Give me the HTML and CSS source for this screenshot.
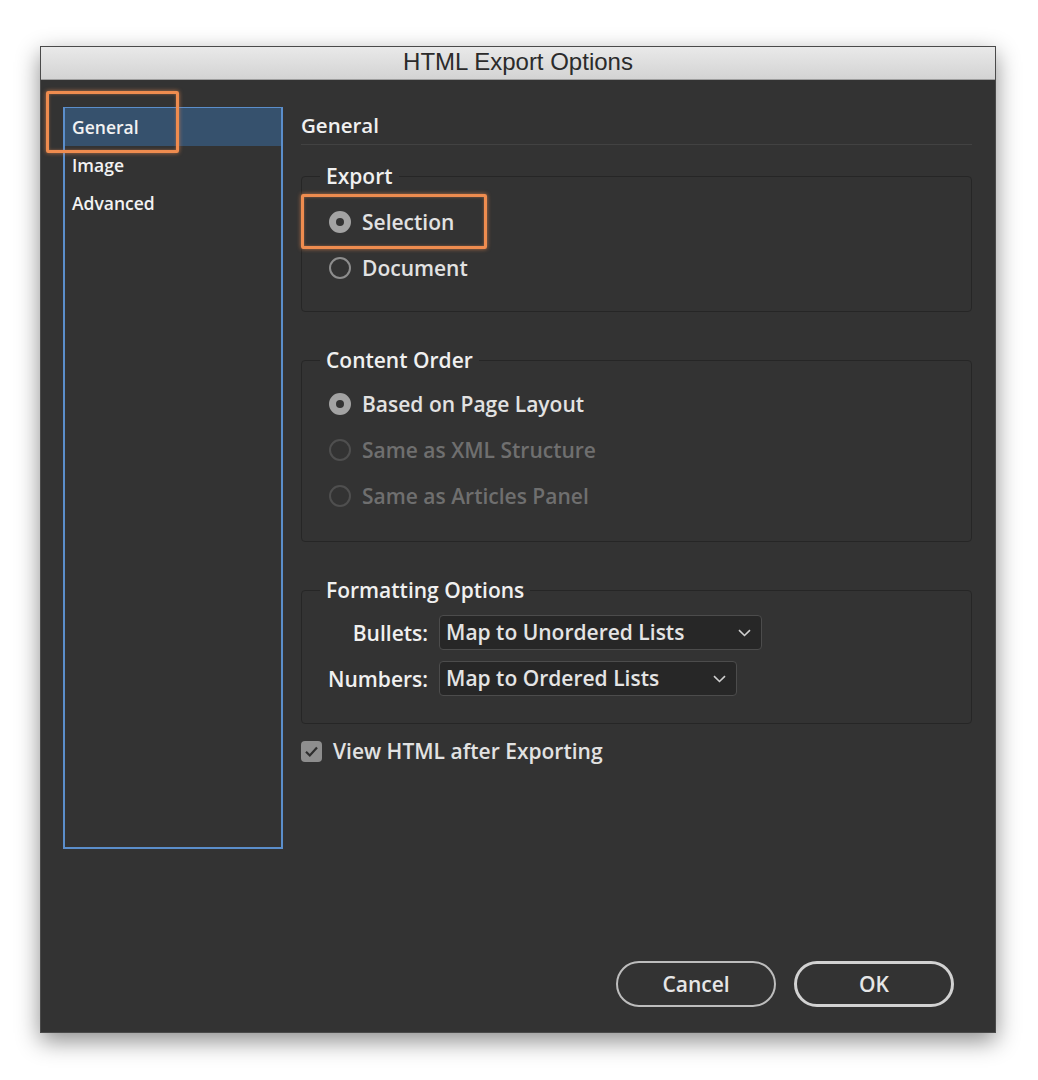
FILE: index.html
```html
<!DOCTYPE html>
<html lang="en">

<head>
  <meta charset="UTF-8">
  <meta name="viewport" content="width=device-width, initial-scale=1.0">
  <title>HTML Export Options</title>
  <link rel="stylesheet" href="styles.css">
</head>

<body>

  <section class="dialog">
    <header class="titlebar">HTML Export Options</header>

    <div class="content">
      <ul class="sidebar">
        <li class="item active">General</li>
        <li class="item">Image</li>
        <li class="item">Advanced</li>
      </ul>

      <div class="panel">
        <h2 class="panel-title">General</h2>

        <fieldset class="group">
          <legend>Export</legend>
          <div class="group-body">
            <div class="radio-row"><span class="radio checked"></span>Selection</div>
            <div class="radio-row"><span class="radio"></span>Document</div>
          </div>
        </fieldset>

        <fieldset class="group group-order">
          <legend>Content Order</legend>
          <div class="group-body">
            <div class="radio-row"><span class="radio checked"></span>Based on Page Layout</div>
            <div class="radio-row disabled"><span class="radio"></span>Same as XML Structure</div>
            <div class="radio-row disabled"><span class="radio"></span>Same as Articles Panel</div>
          </div>
        </fieldset>

        <fieldset class="group group-format">
          <legend>Formatting Options</legend>
          <div class="form-grid">
            <label class="form-label">Bullets:</label>
            <div class="select select-bullets">Map to Unordered Lists
              <svg class="chevron" width="13" height="8" viewBox="0 0 13 8"><path d="M1 1.2 L6.5 6.5 L12 1.2" fill="none" stroke="#cfcfcf" stroke-width="1.6"/></svg>
            </div>
            <label class="form-label">Numbers:</label>
            <div class="select select-numbers">Map to Ordered Lists
              <svg class="chevron" width="13" height="8" viewBox="0 0 13 8"><path d="M1 1.2 L6.5 6.5 L12 1.2" fill="none" stroke="#cfcfcf" stroke-width="1.6"/></svg>
            </div>
          </div>
        </fieldset>

        <div class="check-row">
          <span class="checkbox">
            <svg width="21" height="21" viewBox="0 0 21 21"><path d="M5 10.8 L8.8 14.5 L16 6.5" fill="none" stroke="#2e2e2e" stroke-width="2.2"/></svg>
          </span>
          View HTML after Exporting
        </div>
      </div>
    </div>

    <footer class="footer">
      <button class="btn">Cancel</button>
      <button class="btn btn-default">OK</button>
    </footer>
  </section>

  <!-- callouts drawn over the screenshot -->
  <div class="callout callout-general"></div>
  <div class="callout callout-selection"></div>

</body>

</html>
```

FILE: styles.css
```css
body {
  margin: 0;
  background-color: #ffffff;
  font-family: "Open Sans", "DejaVu Sans", sans-serif;
  position: relative;
  height: 1080px;
}

.dialog {
  position: relative;
  margin: 46px 0 0 40px;
  width: 956px;
  height: 987px;
  box-sizing: border-box;
  background-color: #333333;
  border: 1px solid #4a4a4a;
  box-shadow: 0 8px 22px rgba(0, 0, 0, 0.45);
  display: flex;
  flex-direction: column;
}

.titlebar {
  height: 33px;
  box-sizing: border-box;
  background: linear-gradient(#e9e9e9, #d3d3d3);
  border-bottom: 1px solid #9e9e9e;
  color: #2b2b2b;
  font-family: "Liberation Sans", Arial, sans-serif;
  font-size: 24px;
  line-height: 30px;
  text-align: center;
}

.content {
  display: flex;
  gap: 18px;
  padding: 27px 23px 0 22px;
}

.sidebar {
  list-style: none;
  margin: 0;
  padding: 0;
  width: 220px;
  height: 742px;
  box-sizing: border-box;
  border: 2px solid #5b8ecb;
}

.sidebar .item {
  height: 38px;
  line-height: 38px;
  padding-left: 7px;
  color: #f2f2f2;
  font-size: 17.5px;
  font-weight: 600;
}

.sidebar .active {
  margin-top: -1px;
  background-color: #36516d;
}

.panel {
  flex: 1;
  display: flex;
  flex-direction: column;
}

.panel-title {
  margin: 0;
  height: 37px;
  line-height: 37px;
  border-bottom: 1px solid #424242;
  color: #f0f0f0;
  font-size: 20.5px;
  font-weight: 600;
}

.group {
  margin: 18px 0 0 0;
  padding: 0;
  border: 1px solid #262626;
  border-radius: 4px;
  min-width: 0;
}

.group legend {
  margin-left: 18px;
  padding: 0 6px;
  line-height: 26px;
  color: #f0f0f0;
  font-size: 21px;
  font-weight: 600;
}

.group-body {
  padding: 10px 0 20px 27px;
}

.group-order,
.group-format {
  margin-top: 35px;
}

.group-order .group-body {
  padding-top: 8px;
  padding-bottom: 22px;
}

.radio-row {
  display: flex;
  align-items: center;
  gap: 11px;
  height: 46px;
  color: #e2e2e2;
  font-size: 21px;
  font-weight: 600;
}

.radio {
  width: 22px;
  height: 22px;
  box-sizing: border-box;
  border-radius: 50%;
  border: 2px solid #8d8d8d;
  position: relative;
}

.radio.checked {
  background-color: #a3a3a3;
  border-color: #a3a3a3;
}

.radio.checked::after {
  content: "";
  position: absolute;
  left: 5px;
  top: 5px;
  width: 8px;
  height: 8px;
  border-radius: 50%;
  background-color: #333333;
}

.radio-row.disabled {
  color: #6f6f6f;
}

.radio-row.disabled .radio {
  border-color: #4f4f4f;
}

.form-grid {
  display: grid;
  grid-template-columns: auto auto;
  justify-content: start;
  align-items: center;
  column-gap: 11px;
  row-gap: 11px;
  padding: 12px 0 27px 26px;
}

.form-label {
  text-align: right;
  color: #f0f0f0;
  font-size: 21px;
  font-weight: 600;
}

.select {
  position: relative;
  height: 35px;
  box-sizing: border-box;
  padding-left: 6px;
  line-height: 33px;
  background-color: #272727;
  border: 1px solid #4c4c4c;
  border-radius: 4px;
  color: #e4e4e4;
  font-size: 21px;
  font-weight: 600;
}

.select-bullets {
  width: 323px;
}

.select-numbers {
  width: 298px;
}

.chevron {
  position: absolute;
  right: 10px;
  top: 13px;
}

.check-row {
  display: flex;
  align-items: center;
  gap: 11px;
  margin-top: 13px;
  color: #e2e2e2;
  font-size: 21px;
  font-weight: 600;
}

.checkbox {
  width: 21px;
  height: 21px;
  border-radius: 4px;
  background-color: #8e8e8e;
  display: block;
}

.checkbox svg {
  display: block;
}

.footer {
  margin-top: auto;
  display: flex;
  justify-content: flex-end;
  gap: 18px;
  padding: 0 41px 25px 0;
}

.btn {
  width: 160px;
  height: 46px;
  border-radius: 23px;
  border: 2px solid #bdbdbd;
  background: transparent;
  color: #e6e6e6;
  font-family: "Open Sans", "DejaVu Sans", sans-serif;
  font-size: 21px;
  font-weight: 600;
}

.btn-default {
  border: 3px solid #d2d2d2;
}

.callout {
  position: absolute;
  box-sizing: border-box;
  border: 3px solid #ef8c4f;
  border-radius: 2px;
  box-shadow: 0 0 4px rgba(240, 140, 80, 0.7), inset 0 0 3px rgba(240, 140, 80, 0.5);
}

.callout-general {
  left: 46px;
  top: 91px;
  width: 133px;
  height: 62px;
}

.callout-selection {
  left: 301px;
  top: 194px;
  width: 186px;
  height: 55px;
}
```
